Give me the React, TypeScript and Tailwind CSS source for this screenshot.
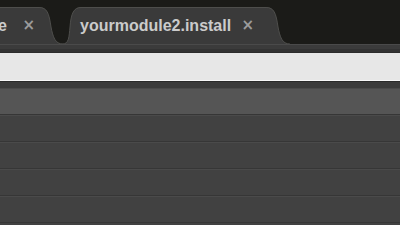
import React from "react";

function Tab({ label, width, ml, labelClass }: { label: string; width: number; ml?: string; labelClass?: string }) {
  const w = width;
  return (
    <div className={`relative h-[37px] shrink-0 ${ml ?? ""}`} style={{ width: w }}>
      <svg className="absolute inset-0" width={w} height={37} viewBox={`0 0 ${w} 37`}>
        <path
          d={`M0 37 C7 37 7 30 8 20 C9 6 12 0 19 0 L${w - 24} 0 C${w - 16} 0 ${w - 14} 6 ${w - 12} 20 C${w - 10} 30 ${w - 8} 37 ${w} 37 Z`}
          fill="#3a3a3a"
        />
        <path
          d={`M0.5 37 C7 37 7 30 8 20 C9 6 12 0.5 19 0.5 L${w - 24} 0.5 C${w - 16} 0.5 ${w - 14} 6 ${w - 12} 20 C${w - 10} 30 ${w - 8} 37 ${w} 37`}
          fill="none"
          stroke="#4e4e4c"
          strokeWidth="1"
        />
      </svg>
      <div className={`relative flex h-full items-center ${labelClass ?? ""}`}>
        <span className="whitespace-nowrap text-[16px] font-bold text-[#cbcbcb] [font-family:'Liberation_Sans',Arial,sans-serif]">{label}</span>
        <span className="ml-auto text-[15px] font-bold leading-none text-[#9c9c9c] [font-family:'DejaVu_Sans',sans-serif]">×</span>
      </div>
    </div>
  );
}

function Row({ hi = false }: { hi?: boolean }) {
  return (
    <div className={`h-[27px] border-b border-[#363636] ${hi ? "bg-[#555555]" : "bg-[#414141]"} shadow-[inset_0_1px_0_#4a4a4a]`} />
  );
}

export default function App() {
  return (
    <div className="h-[225px] w-[400px] overflow-hidden bg-[#414141]">
      <div className="flex h-[44px] items-end overflow-hidden bg-[#1b1b18]">
        <Tab label="e" width={120} ml="-ml-[57px]" labelClass="pl-[55px] pr-[28px]" />
        <Tab label="yourmodule2.install" width={228} ml="-ml-[1px]" labelClass="pl-[18px] pr-[36px]" />
      </div>
      <div className="h-[9px] border-b border-[#2c2c2c] bg-[#3b3b3b] shadow-[inset_0_1px_0_#4a4a4a,inset_0_-3px_0_#333]" />
      <div className="h-[27px] bg-[#e7e7e7]" />
      <div className="h-[1px] bg-[#f7f7f7]" />
      <div className="h-[1px] bg-[#2a2a2a]" />
      <div className="h-[6px] bg-[#3b3b3b]" />
      <Row hi />
      <Row />
      <Row />
      <Row />
      <Row />
    </div>
  );
}
